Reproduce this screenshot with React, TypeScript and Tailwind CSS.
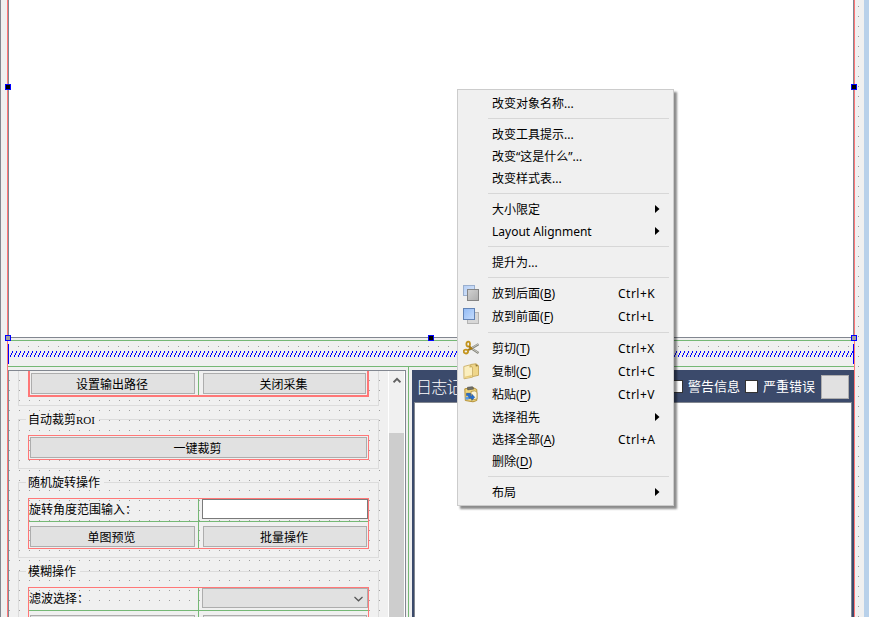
import React from "react";

interface MenuEntry {
  label?: string;
  hotkey?: string;
  shortcut?: string;
  icon?: React.ReactNode;
  submenu?: boolean;
  separator?: boolean;
}

const SendBackIcon = () => (
  <svg width="17" height="17" viewBox="0 0 17 17" shapeRendering="crispEdges">
    <defs>
      <linearGradient id="backBlue" x1="0" y1="0" x2="1" y2="1">
        <stop offset="0" stopColor="#b4cdf3" />
        <stop offset="1" stopColor="#dbe8fb" />
      </linearGradient>
      <linearGradient id="backGray" x1="0" y1="0" x2="1" y2="1">
        <stop offset="0" stopColor="#d2d2d2" />
        <stop offset="1" stopColor="#adadad" />
      </linearGradient>
    </defs>
    <rect x="0.5" y="0.5" width="11" height="10" fill="url(#backBlue)" stroke="#9aafce" />
    <rect x="4.5" y="4.5" width="11" height="11" fill="url(#backGray)" stroke="#858585" />
  </svg>
);

const BringFrontIcon = () => (
  <svg width="17" height="17" viewBox="0 0 17 17" shapeRendering="crispEdges">
    <defs>
      <linearGradient id="frontBlue" x1="0" y1="0" x2="1" y2="1">
        <stop offset="0" stopColor="#92bbf5" />
        <stop offset="1" stopColor="#c5dcfc" />
      </linearGradient>
    </defs>
    <rect x="4.5" y="4.5" width="11" height="11" fill="#d7d7d7" stroke="#b4b4b4" />
    <rect x="0.5" y="0.5" width="11" height="11" fill="url(#frontBlue)" stroke="#6283b5" />
  </svg>
);

const CutIcon = () => (
  <svg width="17" height="17" viewBox="0 0 17 17" fill="none">
    <path d="M15.5 4.2 6 9.8" stroke="#85857b" strokeWidth="2.2" />
    <path d="M15 4.2 7 9" stroke="#d8d8d0" strokeWidth="0.8" />
    <path d="M15.5 13 6.5 7.2" stroke="#85857b" strokeWidth="2.2" />
    <path d="M15 12.5 8.5 8.2" stroke="#d8d8d0" strokeWidth="0.8" />
    <ellipse cx="5.2" cy="4.1" rx="1.8" ry="2.5" stroke="#c3941d" strokeWidth="1.8" />
    <ellipse cx="2.9" cy="11.6" rx="2.2" ry="1.9" stroke="#c3941d" strokeWidth="1.8" />
    <path d="M6 6.2 8.5 8.5 5 10" stroke="#a97b12" strokeWidth="1.8" />
  </svg>
);

const CopyIcon = () => (
  <svg width="17" height="17" viewBox="0 0 17 17">
    <path d="M7.5 1.5 13 .8l2.5 2v9.5l-7 1.5z" fill="#efd68a" stroke="#c9ad63" />
    <path d="M12.5 1 15.5 3l-2.7.4z" fill="#8d7433" />
    <path d="M.8 3.5 6.5 2l3 2.2v10L1 15.8z" fill="#fbefbf" stroke="#d0b671" />
    <path d="M6.5 2v2.6l3-.4z" fill="#d0b260" />
    <path d="M1.6 13.7 8.8 12v1.8l-7.2 1.3z" fill="#e8cb78" />
  </svg>
);

const PasteIcon = () => (
  <svg width="17" height="17" viewBox="0 0 17 17">
    <path d="M1.8 2.8 10 1.5 13.8 3.5v11L10 15.8 2.3 14.5z" fill="#f0d67c" stroke="#b5923a" />
    <path d="M4.5 1.3 9.5.7l1.2 2.4-6 .8z" fill="#73736b" stroke="#4b4b48" strokeWidth="0.6" />
    <path d="M8 5.5 12 4.8l2 1.7V13l-5.5 1z" fill="#fbf5dc" stroke="#ad9041" strokeWidth="0.8" />
    <path d="M3.5 7.3h4v2.9h1.4V8.2l2.8 3.1-2.8 3v-1.9H5.5V9.6h-2z" fill="#236ed0" stroke="#164790" strokeWidth="0.5" />
    <path d="M2.5 10.8h3v2.8h-3z" fill="#559cf0" />
  </svg>
);

const menuEntries: MenuEntry[] = [
  { label: "改变对象名称..." },
  { separator: true },
  { label: "改变工具提示..." },
  { label: "改变“这是什么”..." },
  { label: "改变样式表..." },
  { separator: true },
  { label: "大小限定", submenu: true },
  { label: "Layout Alignment", submenu: true },
  { separator: true },
  { label: "提升为..." },
  { separator: true },
  { label: "放到后面", hotkey: "B", shortcut: "Ctrl+K", icon: <SendBackIcon /> },
  { label: "放到前面", hotkey: "F", shortcut: "Ctrl+L", icon: <BringFrontIcon /> },
  { separator: true },
  { label: "剪切", hotkey: "T", shortcut: "Ctrl+X", icon: <CutIcon /> },
  { label: "复制", hotkey: "C", shortcut: "Ctrl+C", icon: <CopyIcon /> },
  { label: "粘贴", hotkey: "P", shortcut: "Ctrl+V", icon: <PasteIcon /> },
  { label: "选择祖先", submenu: true },
  { label: "选择全部", hotkey: "A", shortcut: "Ctrl+A" },
  { label: "删除", hotkey: "D" },
  { separator: true },
  { label: "布局", submenu: true },
];

const MenuItem: React.FC<{ entry: MenuEntry }> = ({ entry }) => {
  if (entry.separator) {
    return (
      <div className="flex h-[9px] items-center pr-1 pl-[30px]">
        <div className="h-px w-full bg-[#d7d7d7]" />
      </div>
    );
  }

  return (
    <div className={`flex items-center ${entry.icon ? "h-[23px]" : "h-[22px]"}`}>
      <div className="w-[34px] pl-[5px]">{entry.icon}</div>
      <span className={`flex-1 whitespace-nowrap ${entry.icon ? "" : "pt-[2px]"}`}>
        {entry.label}
        {entry.hotkey && (
          <>
            (<span className="underline underline-offset-2">{entry.hotkey}</span>)
          </>
        )}
      </span>
      {entry.shortcut && (
        <span className={`w-[55px] tracking-[0.5px] whitespace-nowrap ${entry.icon ? "" : "pt-[2px]"}`}>
          {entry.shortcut}
        </span>
      )}
      {entry.submenu && (
        <svg className="mr-[13px]" width="5" height="8" viewBox="0 0 5 8">
          <path d="M0 0v8l4.5-4z" fill="#000" />
        </svg>
      )}
    </div>
  );
};

const ContextMenu = () => (
  <div className="absolute top-[89px] left-[457px] h-[417px] w-[217px] border border-[#ccc] bg-[#f0f0f0] pb-[2px] font-['Noto_Sans','Noto_Sans_CJK_SC',sans-serif] text-[12px] leading-[20px] text-black shadow-[3px_3px_2px_rgba(0,0,0,0.45)]">
    <div className="pt-[2px]">
      {menuEntries.map((entry, index) => (
        <MenuItem key={index} entry={entry} />
      ))}
    </div>
  </div>
);

const PushButton: React.FC<{ children?: React.ReactNode; className?: string }> = ({
  children,
  className = "",
}) => (
  <button
    className={`flex h-[21px] shrink-0 items-center justify-center border border-[#adadad] bg-[#e1e1e1] pr-[2px] ${className}`}
  >
    {children}
  </button>
);

const GroupBox: React.FC<{ title: React.ReactNode; className: string; children: React.ReactNode }> = ({
  title,
  className,
  children,
}) => (
  <section className={`relative mt-[13px] ml-[9px] w-[361px] shrink-0 border border-[#dcdcdc] pt-[15px] pl-[9px] ${className}`}>
    <h3 className="absolute -top-[9px] left-[7px] bg-[#f0f0f0] pr-1 pl-[2px] leading-[16px] whitespace-nowrap">
      {title}
    </h3>
    {children}
  </section>
);

const GreenColumn = () => <div className="w-px self-stretch bg-[#75b875]" />;

const ToolPanel = () => (
  <div className="flex w-[398px] border-x border-t border-[#828790] bg-[#f0f0f0]">
    <div className="flex w-[379px] flex-col overflow-hidden bg-[radial-gradient(circle_at_0.5px_0.5px,#a0a0a0_0.7px,transparent_0.7px)] bg-[length:10px_10px] bg-[position:0px_9px]">
      <section className="ml-[9px] h-[35px] w-[361px] shrink-0 border-x border-b border-[#dcdcdc] pl-[9px]">
        <div className="flex h-[26px] w-[341px] border-x-2 border-b-2 border-[#ff7777] bg-[#f0f0f0] pl-px">
          <PushButton className="mt-[2px] w-[164px]">设置输出路径</PushButton>
          <div className="w-[3px]" />
          <GreenColumn />
          <PushButton className="mt-[2px] ml-1 w-[163px]">关闭采集</PushButton>
        </div>
      </section>

      <GroupBox
        className="h-[50px]"
        title={
          <>
            自动裁剪<span className="font-['Liberation_Serif',serif] text-[11px]">ROI</span>
          </>
        }
      >
        <div className="h-[25px] w-[341px] border border-[#ff7777] pt-px pl-px">
          <PushButton className="w-[337px]">一键裁剪</PushButton>
        </div>
      </GroupBox>

      <GroupBox className="h-[76px]" title="随机旋转操作">
        <div className="h-[51px] w-[341px] border border-[#ff7777]">
          <div className="flex h-[22px]">
            <span className="w-[169px] leading-[19px]">旋转角度范围输入：</span>
            <GreenColumn />
            <div className="ml-[3px] h-[20px] w-[166px] border border-[#7a7a7a] bg-white" />
          </div>
          <div className="h-px bg-[#75b875]" />
          <div className="flex h-[26px] pl-px">
            <PushButton className="mt-1 w-[165px]">单图预览</PushButton>
            <div className="w-[3px]" />
            <GreenColumn />
            <PushButton className="mt-1 ml-1 w-[164px]">批量操作</PushButton>
          </div>
        </div>
      </GroupBox>

      <GroupBox className="h-[90px]" title="模糊操作">
        <div className="h-[60px] w-[341px] border border-[#ff7777]">
          <div className="flex h-[22px]">
            <span className="w-[169px] leading-[19px]">滤波选择：</span>
            <GreenColumn />
            <div className="ml-[3px] flex h-[20px] w-[166px] items-center justify-end border border-[#adadad] bg-[#e1e1e1] pt-px pr-1">
              <svg width="9" height="6" viewBox="0 0 9 6" fill="none" stroke="#555">
                <path d="M.5 1 4.5 4.8 8.5 1" strokeWidth="1.2" />
              </svg>
            </div>
          </div>
          <div className="h-px bg-[#75b875]" />
          <div className="flex h-[26px] pl-px">
            <PushButton className="mt-1 w-[165px]" />
            <div className="w-[3px]" />
            <GreenColumn />
            <PushButton className="mt-1 ml-1 w-[164px]" />
          </div>
        </div>
      </GroupBox>
    </div>

    <div className="flex w-[17px] flex-col border-x border-white bg-[#f0f0f0]">
      <div className="flex h-[62px] justify-center pt-[6px]">
        <svg width="8" height="7" viewBox="0 0 8 7" fill="none" stroke="#606060">
          <path d="M.5 5.3 4 1.8 7.5 5.3" strokeWidth="2" />
        </svg>
      </div>
      <div className="flex-1 bg-[#cdcdcd]" />
    </div>
  </div>
);

const LogPanel = () => (
  <div className="flex w-[442px] flex-col bg-[#3b4a6b] px-[2px]">
    <div className="flex h-[32px] items-center text-white">
      <span className="ml-[2px] flex-1 text-[16px] font-light tracking-[-0.8px]">日志记录</span>
      <span className="h-[13px] w-[13px] border border-[#333] bg-white" />
      <span className="-mt-px ml-[5px] w-[57px] text-[13px] whitespace-nowrap">警告信息</span>
      <span className="h-[13px] w-[13px] border border-[#333] bg-white" />
      <span className="-mt-px ml-[5px] w-[58px] text-[13px] whitespace-nowrap">严重错误</span>
      <button className="mt-px mr-[3px] h-[24px] w-[28px] border border-[#adadad] bg-[#e1e1e1]" />
    </div>
    <div className="flex-1 border-x border-t border-[#828790] bg-white" />
  </div>
);

const SpacerStrip = () => (
  <div className="flex h-[25px] items-start justify-between pt-[3px]">
    <div className="h-[20px] w-px bg-[#0000ff]" />
    <svg className="mt-[7px]" width="844" height="6" shapeRendering="crispEdges">
      <defs>
        <pattern id="hatch" width="4" height="6" patternUnits="userSpaceOnUse">
          <path d="M3 0h1v2h-1zM2 2h1v2h-1zM1 4h1v2h-1z" fill="#0000ff" />
        </pattern>
      </defs>
      <rect width="844" height="6" fill="url(#hatch)" />
    </svg>
    <div className="h-[20px] w-px bg-[#0000ff]" />
  </div>
);

// Selection handles around the canvas; the ones on layout corners are greyed out.
const handles = [
  { place: "top-[84px] left-[5px]", fill: "bg-black" },
  { place: "top-[84px] left-[851px]", fill: "bg-black" },
  { place: "top-[335px] left-[5px]", fill: "bg-[#a0a0a0]" },
  { place: "top-[335px] left-[428px]", fill: "bg-black" },
  { place: "top-[335px] left-[851px]", fill: "bg-[#a0a0a0]" },
];

const App: React.FC = () => {
  return (
    <div className="relative flex h-[617px] w-[869px] overflow-hidden bg-[#f0f0f0] bg-[radial-gradient(circle_at_0.5px_0.5px,#a0a0a0_0.7px,transparent_0.7px)] bg-[length:10px_10px] bg-[position:8px_6px] font-['Noto_Sans_CJK_SC',sans-serif] text-[12px] text-black">
      <div className="w-[7px] border-l border-[#828790]" />
      <div className="w-px bg-[#ff7777]" />
      <main className="flex w-[846px] flex-col">
        <div className="h-[338px] shrink-0 border-x border-b border-[#828790] bg-white" />
        <div className="mt-[2px] h-px bg-[#75b875]" />
        <SpacerStrip />
        <div className="h-px bg-[#75b875]" />
        <div className="flex min-h-0 flex-1">
          <div className="flex pt-[3px]">
            <ToolPanel />
          </div>
          <div className="mr-[3px] ml-[2px] w-px bg-[#75b875]" />
          <div className="flex pt-[3px]">
            <LogPanel />
          </div>
        </div>
      </main>
      <div className="w-px bg-[#ff7777]" />
      <div className="w-[9px]" />
      <div className="w-[5px] bg-[#b9d1ea]" />

      {handles.map((handle) => (
        <div
          key={handle.place}
          className={`absolute h-[6px] w-[6px] border border-[#0000ff] ${handle.place} ${handle.fill}`}
        />
      ))}

      <ContextMenu />
    </div>
  );
};

export default App;
